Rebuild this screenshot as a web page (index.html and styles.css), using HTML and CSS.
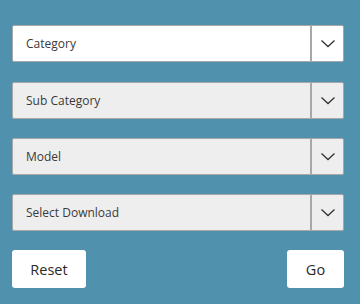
FILE: index.html
```html
<!DOCTYPE html>
<html lang="en">
<head>
    <meta charset="UTF-8">
    <title>Downloads</title>
    <link rel="stylesheet" href="styles.css">
</head>
<body>
    <form class="finder">
        <div class="select-box first">
            <span class="select-label">Category</span>
            <span class="select-arrow">
                <svg width="16" height="9" viewBox="0 0 16 9"><path d="M1.5 1.5 L8 7.5 L14.5 1.5" fill="none" stroke="#333" stroke-width="1.3"/></svg>
            </span>
        </div>
        <div class="select-box">
            <span class="select-label">Sub Category</span>
            <span class="select-arrow">
                <svg width="16" height="9" viewBox="0 0 16 9"><path d="M1.5 1.5 L8 7.5 L14.5 1.5" fill="none" stroke="#333" stroke-width="1.3"/></svg>
            </span>
        </div>
        <div class="select-box">
            <span class="select-label">Model</span>
            <span class="select-arrow">
                <svg width="16" height="9" viewBox="0 0 16 9"><path d="M1.5 1.5 L8 7.5 L14.5 1.5" fill="none" stroke="#333" stroke-width="1.3"/></svg>
            </span>
        </div>
        <div class="select-box">
            <span class="select-label">Select Download</span>
            <span class="select-arrow">
                <svg width="16" height="9" viewBox="0 0 16 9"><path d="M1.5 1.5 L8 7.5 L14.5 1.5" fill="none" stroke="#333" stroke-width="1.3"/></svg>
            </span>
        </div>
        <div class="actions">
            <button type="reset" class="btn btn-reset">Reset</button>
            <button type="submit" class="btn btn-go">Go</button>
        </div>
    </form>
</body>
</html>
```

FILE: styles.css
```css
body {
    margin: 0;
    background-color: #5092ad;
    font-family: "Open Sans", Arial, sans-serif;
    color: #333;
}
.finder {
    width: 332px;
    padding: 25px 0 0 12px;
}
.select-box {
    display: flex;
    height: 37px;
    box-sizing: border-box;
    border: 1px solid #a8a8a8;
    border-radius: 2px;
    background-color: #eeeeee;
    margin-bottom: 19px;
}
.select-box.first {
    background-color: white;
    margin-bottom: 20px;
}
.select-label {
    flex: 1;
    display: flex;
    align-items: center;
    padding-left: 13px;
    font-size: 12px;
    color: #3a3a3a;
}
.select-arrow {
    width: 31px;
    border-left: 2px solid #a8a8a8;
    display: flex;
    align-items: center;
    justify-content: center;
}
.actions {
    display: flex;
    justify-content: space-between;
}
.btn {
    height: 38px;
    border: none;
    border-radius: 3px;
    background-color: white;
    color: #2a2a2a;
    font-family: "Open Sans", Arial, sans-serif;
    font-size: 14.5px;
    font-weight: 400;
    cursor: pointer;
}
.btn-reset {
    width: 74px;
}
.btn-go {
    width: 57px;
}
```
